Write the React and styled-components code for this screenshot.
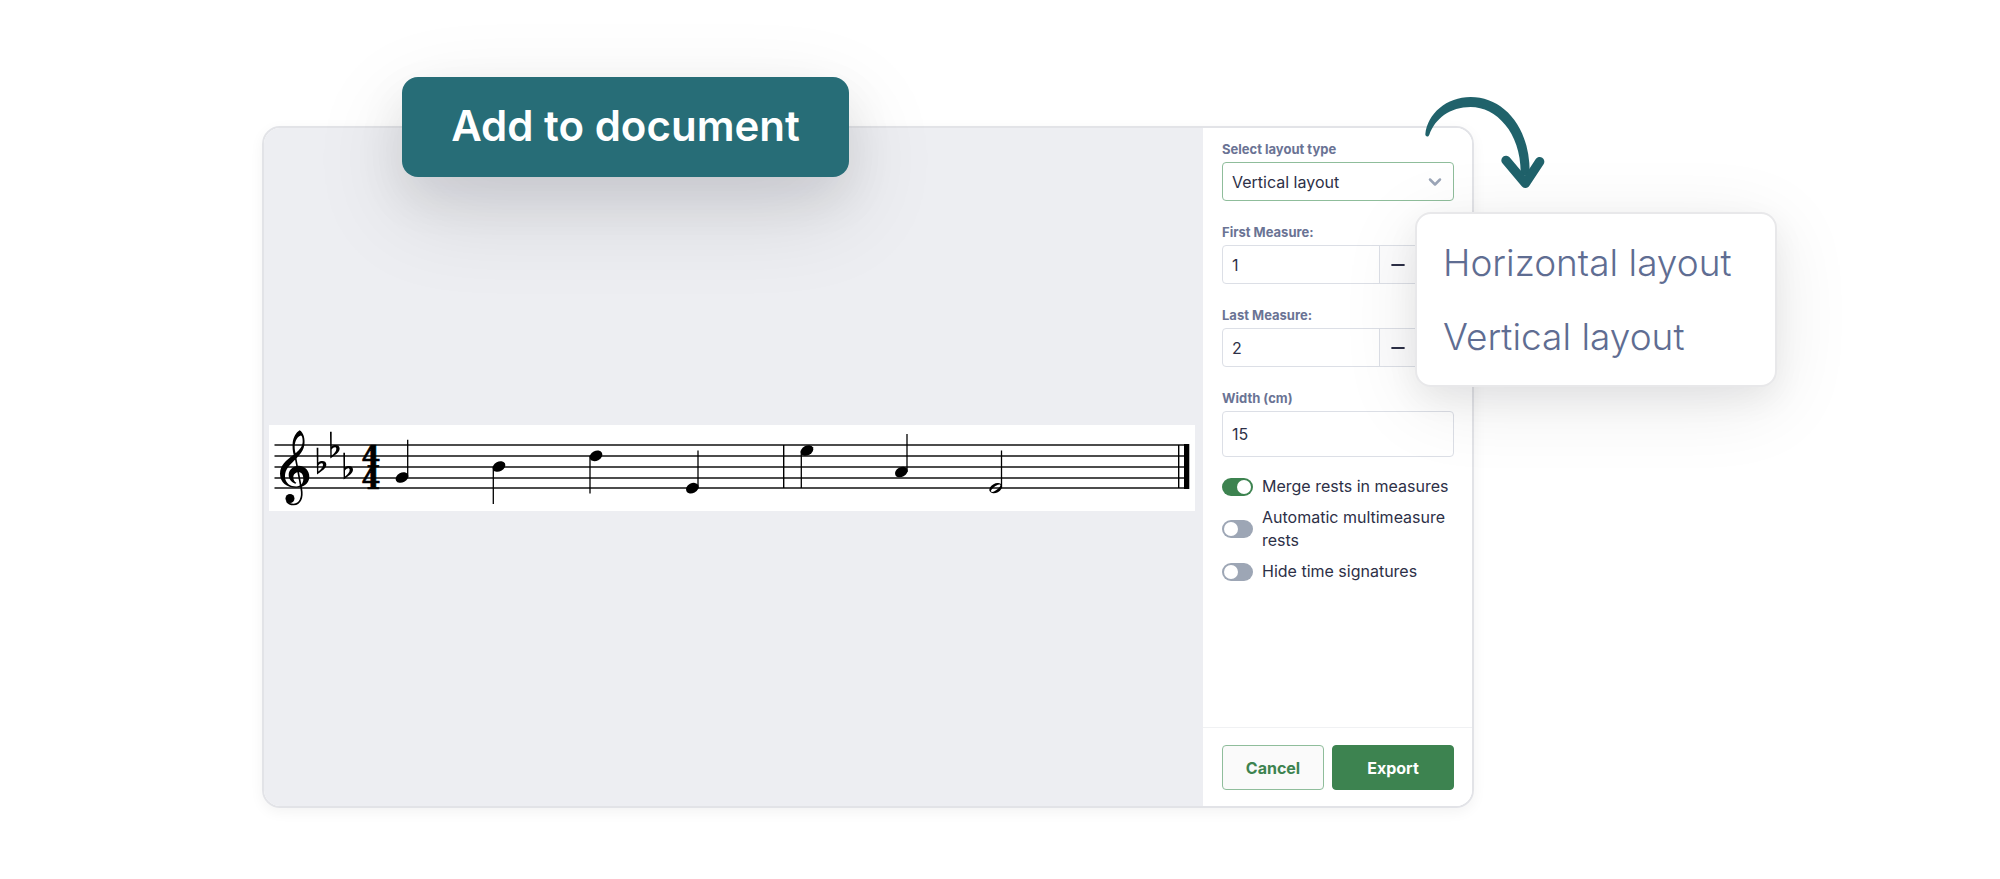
import React, { useState } from 'react';
import styled, { createGlobalStyle } from 'styled-components';
import { ChevronDown, Minus, Plus } from 'lucide-react';

const GlobalStyle = createGlobalStyle`
  *, *::before, *::after {
    box-sizing: border-box;
  }
  body {
    margin: 0;
    background: #fff;
    font-family: Inter, "Liberation Sans", sans-serif;
    color: #2d3047;
  }
  button, input, select {
    font: inherit;
    color: inherit;
  }
`;

const Page = styled.main`
  display: flex;
  min-height: 100vh;
  padding: 126px 26.3% 71px 13.1%;
  overflow: hidden;
`;

const Dialog = styled.section`
  position: relative;
  flex: 1;
  display: flex;
  min-width: 0;
  border: 2px solid #e2e3e7;
  border-radius: 18px;
  box-shadow: 0 4px 14px rgba(0, 0, 0, 0.05);
`;

const Preview = styled.div`
  flex: 1;
  display: flex;
  align-items: center;
  min-width: 0;
  padding: 1px 8px 0 5px;
  background: #edeef2;
  border-radius: 16px 0 0 16px;
`;

const Sheet = styled.svg`
  display: block;
  width: 100%;
  background: #fff;
`;

const Sidebar = styled.form`
  display: flex;
  flex-direction: column;
  width: 269px;
  background: #fff;
  border-radius: 0 16px 16px 0;
`;

const Fields = styled.div`
  flex: 1;
  display: flex;
  flex-direction: column;
  gap: 22px;
  padding: 12px 18px 12px 19px;
`;

const Field = styled.div`
  display: flex;
  flex-direction: column;
  gap: 4px;
`;

const Label = styled.label`
  font-size: 13px;
  font-weight: 700;
  line-height: 18px;
  color: #6a7394;
`;

const Control = styled.div`
  display: flex;
  align-items: center;
  height: ${props => (props.$tall ? '46px' : '39px')};
  border: 1px solid ${props => (props.$active ? '#8fbd9b' : '#dcdfe6')};
  border-radius: 4px;
  overflow: hidden;
`;

const Select = styled.select`
  flex: 1;
  height: 100%;
  margin-right: -30px;
  padding: 0 30px 0 9px;
  border: none;
  outline: none;
  appearance: none;
  background: transparent;
  font-size: 16px;
`;

const SelectArrow = styled(ChevronDown)`
  margin-right: 8px;
  color: #9ba5b7;
  pointer-events: none;
`;

const Input = styled.input`
  flex: 1;
  min-width: 0;
  height: 100%;
  padding: 0 9px;
  border: none;
  outline: none;
  background: transparent;
  font-size: 16px;
`;

const StepButton = styled.button`
  display: flex;
  align-items: center;
  justify-content: center;
  width: 37px;
  height: 100%;
  padding: 0;
  border: none;
  border-left: 1px solid #dcdfe6;
  background: #fcfcfd;
  cursor: pointer;
`;

const Options = styled.div`
  display: flex;
  flex-direction: column;
  gap: 8px;
  margin-top: -4px;
`;

const Option = styled.label`
  display: flex;
  align-items: center;
  gap: 9px;
  font-size: 16px;
  line-height: 23px;
  cursor: pointer;
`;

const Switch = styled.input`
  appearance: none;
  flex: none;
  width: 31px;
  height: 18px;
  margin: 0;
  padding: 2px;
  border-radius: 9px;
  background: #9da6b5;
  cursor: pointer;

  &::before {
    content: '';
    display: block;
    width: 14px;
    height: 14px;
    border-radius: 50%;
    background: #fff;
  }
  &:checked {
    background: #3d8350;
  }
  &:checked::before {
    margin-left: auto;
  }
`;

const Actions = styled.footer`
  display: flex;
  gap: 8px;
  padding: 17px 18px 16px 19px;
  border-top: 1px solid #f0f1f3;
`;

const ActionButton = styled.button`
  flex: ${props => (props.$primary ? '6 1 0' : '5 1 0')};
  height: 45px;
  padding: 0;
  border: 1px solid ${props => (props.$primary ? '#3d8350' : '#8fbd9b')};
  border-radius: 4px;
  background: ${props => (props.$primary ? '#3d8350' : '#fafafa')};
  color: ${props => (props.$primary ? '#fff' : '#3d8350')};
  font-size: 16px;
  font-weight: 700;
  cursor: pointer;
`;

/* Callouts that float over the dialog */
const AddButton = styled.button`
  position: absolute;
  top: -51px;
  left: 138px;
  width: 447px;
  height: 100px;
  padding: 0 0 3px;
  border: none;
  border-radius: 16px;
  background: #276d77;
  color: #fff;
  font-size: 42px;
  font-weight: 600;
  box-shadow: 0 32px 96px rgba(10, 10, 20, 0.12), 0 20px 48px rgba(10, 10, 20, 0.08);
  cursor: pointer;
`;

const CurvedArrow = styled.svg`
  position: absolute;
  top: -31px;
  right: -73px;
  width: 120px;
  height: 92px;
`;

const LayoutMenu = styled.div`
  position: absolute;
  top: 84px;
  right: -305px;
  display: flex;
  flex-direction: column;
  width: 362px;
  padding: 12px 0 11px;
  border: 2px solid #e8e8ea;
  border-radius: 16px;
  background: #fff;
  box-shadow: 0 16px 80px rgba(10, 10, 20, 0.09), 0 12px 32px rgba(10, 10, 20, 0.06);
`;

const MenuItem = styled.button`
  padding: 0 26px;
  border: none;
  background: transparent;
  color: #5f6d92;
  font-size: 37px;
  font-weight: 350;
  line-height: 74px;
  text-align: left;
  cursor: pointer;
`;

const STAFF_LINES = [20, 31, 42, 53, 63];

// stemX and stemEnd are where the stem stands and the y it reaches
const NOTES = [
  { x: 133, y: 52.5, stemX: 138.7, stemEnd: 14.8 },
  { x: 230, y: 41.5, stemX: 224.3, stemEnd: 79 },
  { x: 327, y: 30.8, stemX: 321, stemEnd: 68.5 },
  { x: 423.3, y: 63.2, stemX: 429, stemEnd: 25.5 },
  { x: 538, y: 25.5, stemX: 532.3, stemEnd: 63 },
  { x: 632.3, y: 47, stemX: 638, stemEnd: 9 },
  { x: 726.7, y: 63.2, stemX: 732.5, stemEnd: 25.5, half: true },
];

const FLATS = [
  { x: 203, y: 190 },
  { x: 243, y: 142 },
  { x: 283, y: 205 },
];

const Note = ({ x, y, stemX, stemEnd, half }) => (
  <g>
    <line x1={stemX} x2={stemX} y1={y} y2={stemEnd} stroke="#000" strokeWidth="1.3" />
    <g transform={`translate(${x} ${y}) rotate(-28)`}>
      {half ? (
        <path
          fillRule="evenodd"
          d="M-6.7 0a6.7 4.6 0 1 0 13.4 0a6.7 4.6 0 1 0 -13.4 0ZM-5.7 .6C-5.6 -1.2 4.8 -3.8 5.7 -.6C5.6 1.2 -4.8 3.8 -5.7 .6Z"
        />
      ) : (
        <ellipse rx="6.7" ry="4.9" />
      )}
    </g>
  </g>
);

const Score = () => (
  <Sheet viewBox="0 0 926 86" role="img" aria-label="Two measures in C minor, 4/4">
    {STAFF_LINES.map(y => (
      <line key={y} x1="5.5" x2="920" y1={y} y2={y} stroke="#111" strokeWidth="1.4" />
    ))}
    <g transform="translate(-19 -14.5) scale(.33333)">
      <path
        fillRule="evenodd"
        d="M149 59C161 66 166 86 163 104C159 127 140 142 127 156C112 170 104 183 105 201C107 218 120 228 139 228C152 227 160 219 160 205C160 192 155 185 146 185C137 185 130 191 130 200C130 209 134 214 139 217C139 219 136 220 134 219C123 214 116 205 116 193C116 178 130 166 146 166C165 166 178 181 178 199C178 219 160 232 138 232C110 232 90 216 90 190C90 165 108 150 131 133C128 122 127 110 128 97C130 80 138 65 149 59ZM153 75C143 77 134 92 134 108C134 116 135 122 137 128C150 117 158 106 158 92C158 82 156 76 153 75Z"
      />
      <path d="M134 128L154 235C159 262 150 281 131 282C121 282 114 278 110 272" fill="none" stroke="#000" strokeWidth="5" />
      <circle cx="120" cy="264" r="13.5" />
      {FLATS.map(({ x, y }) => (
        <path
          key={x}
          transform={`translate(${x} ${y})`}
          fillRule="evenodd"
          d="M-3 -78H2V-34C10 -41 26 -40 26 -28C26 -16 12 -9 -2 2ZM2 -25V-7C10 -13 16 -19 16 -27C16 -35 7 -33 2 -25Z"
        />
      ))}
    </g>
    <g
      fontFamily="DejaVu Serif Condensed, DejaVu Serif, serif"
      fontSize="30"
      fontWeight="700"
      stroke="#000"
      strokeWidth=".7"
      textAnchor="middle"
    >
      <text x="102" y="41.5">4</text>
      <text x="102" y="63.5">4</text>
    </g>
    {NOTES.map(note => (
      <Note key={note.x} {...note} />
    ))}
    <rect x="514" y="20" width="1.4" height="43" />
    <rect x="909" y="20" width="1.4" height="43" />
    <rect x="915" y="19" width="5.3" height="45" />
  </Sheet>
);

const Stepper = ({ id, label, initial }) => {
  const [value, setValue] = useState(initial);

  return (
    <Field>
      <Label htmlFor={id}>{label}</Label>
      <Control>
        <Input id={id} inputMode="numeric" value={value} onChange={e => setValue(Number(e.target.value) || 1)} />
        <StepButton type="button" aria-label="Decrease" onClick={() => setValue(Math.max(1, value - 1))}>
          <Minus size={20} strokeWidth={2.5} />
        </StepButton>
        <StepButton type="button" aria-label="Increase" onClick={() => setValue(value + 1)}>
          <Plus size={20} strokeWidth={2.5} />
        </StepButton>
      </Control>
    </Field>
  );
};

const App = () => {
  const [layout, setLayout] = useState('vertical');

  return (
    <>
      <GlobalStyle />
      <Page>
        <Dialog>
          <Preview>
            <Score />
          </Preview>
          <Sidebar onSubmit={e => e.preventDefault()}>
            <Fields>
              <Field>
                <Label htmlFor="layout">Select layout type</Label>
                <Control $active>
                  <Select id="layout" value={layout} onChange={e => setLayout(e.target.value)}>
                    <option value="horizontal">Horizontal layout</option>
                    <option value="vertical">Vertical layout</option>
                  </Select>
                  <SelectArrow size={20} strokeWidth={3} />
                </Control>
              </Field>
              <Stepper id="first" label="First Measure:" initial={1} />
              <Stepper id="last" label="Last Measure:" initial={2} />
              <Field>
                <Label htmlFor="width">Width (cm)</Label>
                <Control $tall>
                  <Input id="width" defaultValue="15" />
                </Control>
              </Field>
              <Options>
                <Option>
                  <Switch type="checkbox" defaultChecked />
                  Merge rests in measures
                </Option>
                <Option>
                  <Switch type="checkbox" />
                  Automatic multimeasure rests
                </Option>
                <Option>
                  <Switch type="checkbox" />
                  Hide time signatures
                </Option>
              </Options>
            </Fields>
            <Actions>
              <ActionButton type="button">Cancel</ActionButton>
              <ActionButton type="submit" $primary>Export</ActionButton>
            </Actions>
          </Sidebar>

          <AddButton type="button">Add to document</AddButton>
          <CurvedArrow viewBox="705 50 360 276" fill="#20626b" aria-hidden="true">
            <path d="M706 162C712 100 770 50 842 50C940 50 1023 140 1019 285L992 285C996 160 920 80 842 80C780 80 735 115 718 163C715 171 706 170 706 162Z" />
            <path d="M948 240L1006 309L1049 244" fill="none" stroke="#20626b" strokeWidth="28" strokeLinecap="round" strokeLinejoin="round" />
          </CurvedArrow>
          <LayoutMenu>
            <MenuItem type="button" onClick={() => setLayout('horizontal')}>Horizontal layout</MenuItem>
            <MenuItem type="button" onClick={() => setLayout('vertical')}>Vertical layout</MenuItem>
          </LayoutMenu>
        </Dialog>
      </Page>
    </>
  );
};

export default App;
